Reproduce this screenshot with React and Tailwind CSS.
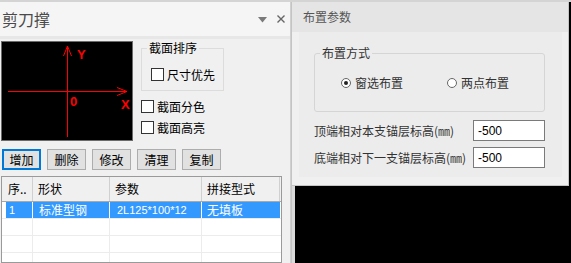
import React from "react";

function Check({ label }) {
  return (
    <div className="flex items-center h-[21px]">
      <span className="w-[13px] h-[13px] border border-[#333] bg-white shrink-0" />
      <span className="ml-[3px] leading-none">{label}</span>
    </div>
  );
}

function Radio({ label, checked, w }) {
  return (
    <div className={`flex items-center ${w}`}>
      <span className="w-[10px] h-[10px] rounded-full border border-[#666] bg-white flex items-center justify-center shrink-0">
        {checked && <span className="w-[4px] h-[4px] rounded-full bg-[#222]" />}
      </span>
      <span className="ml-[4px] leading-none">{label}</span>
    </div>
  );
}

function Btn({ label, focus }) {
  return (
    <div
      className={
        focus
          ? "w-[39px] h-[21px] border-2 border-[#0078d7] bg-[#e1e1e1] flex items-center justify-center leading-none"
          : "w-[39px] h-[21px] border border-[#adadad] bg-[#e1e1e1] flex items-center justify-center leading-none"
      }
    >
      {label}
    </div>
  );
}

function EmptyRow() {
  return (
    <div className="flex h-[17px] border-b border-[#ececec] shrink-0">
      <div className="w-[31px] border-r border-[#ececec]" />
      <div className="w-[77px] border-r border-[#ececec]" />
      <div className="w-[92px] border-r border-[#ececec]" />
      <div className="w-[79px]" />
    </div>
  );
}

export default function App() {
  return (
    <div className="w-[571px] h-[263px] overflow-hidden flex flex-col bg-black font-['Noto_Sans_CJK_SC','Microsoft_YaHei',sans-serif] text-[12px] text-black">
      <div className="h-[2px] bg-[#d4d4d4] shrink-0" />
      <div className="flex flex-1 min-h-0">
        {/* Left panel */}
        <div className="w-[291px] shrink-0 flex flex-col bg-[#f0f0f0] border-r border-[#d0d0d0]">
          <div className="h-[34px] bg-[#f5f5f5] flex items-center pl-[2px] shrink-0">
            <span className="text-[16px] leading-none text-[#4a4a4a]">剪刀撑</span>
            <div className="flex-1" />
            <svg width="9" height="6" viewBox="0 0 9 6" className="mr-[10px] mt-[2px]">
              <path d="M0 0 H9 L4.5 5.5 Z" fill="#7a7a7a" />
            </svg>
            <svg width="8" height="8" viewBox="0 0 8 8" className="mr-[5px]">
              <path d="M0.5 0.5 L7.5 7.5 M7.5 0.5 L0.5 7.5" stroke="#666" strokeWidth="1.4" />
            </svg>
          </div>
          <div className="h-[3px] bg-[#e7e7e7] shrink-0" />

          <div className="flex mt-[2px] shrink-0">
            <div className="ml-[1px] w-[132px] h-[100px] border border-[#6b6b6b] bg-black">
              <svg width="130" height="98" viewBox="2 42 130 98">
                <g stroke="#ff0000" strokeWidth="1" fill="none">
                  <path d="M67.5 46 V137" />
                  <path d="M63.5 56 L67.5 46 L71.5 56" />
                  <path d="M8 91.5 H127" />
                  <path d="M117 87.5 L127 91.5 L117 95.5" />
                </g>
                <g fill="#ff0000" fontFamily="'Liberation Sans', sans-serif" fontWeight="bold" fontSize="13">
                  <text x="77" y="59">Y</text>
                  <text x="121" y="109">X</text>
                  <text x="70" y="106">0</text>
                </g>
              </svg>
            </div>
            <div className="ml-[8px] flex flex-col">
              <fieldset className="w-[83px] h-[50px] border border-[#dcdcdc] pt-[13px]">
                <legend className="ml-[5px] px-[2px] leading-[14px]">截面排序</legend>
                <div className="-mt-[4px] pl-[9px]">
                  <Check label="尺寸优先" />
                </div>
              </fieldset>
              <div className="mt-[5px]">
                <Check label="截面分色" />
                <Check label="截面高亮" />
              </div>
            </div>
          </div>

          <div className="flex gap-[6px] pl-[2px] mt-[8px] shrink-0">
            <Btn label="增加" focus />
            <Btn label="删除" />
            <Btn label="修改" />
            <Btn label="清理" />
            <Btn label="复制" />
          </div>

          <div className="ml-[1px] mt-[6px] w-[281px] flex-1 border border-[#9a9a9a] bg-white flex flex-col overflow-hidden">
            <div className="flex h-[25px] bg-[#f0f0f0] border-b border-[#a8a8a8] shrink-0">
              <div className="w-[31px] border-r border-[#d0d0d0] pl-[6px] flex items-center">序..</div>
              <div className="w-[77px] border-r border-[#d0d0d0] pl-[5px] flex items-center">形状</div>
              <div className="w-[92px] border-r border-[#d0d0d0] pl-[5px] flex items-center">参数</div>
              <div className="w-[78px] border-r border-[#d0d0d0] pl-[5px] flex items-center">拼接型式</div>
            </div>
            <div className="flex h-[17px] border-b border-[#ececec] shrink-0 text-white">
              <div className="w-[31px] border-r border-white pl-[4px] flex">
                <div className="flex-1 bg-[#3399ff] pl-[3px] flex items-center font-['Liberation_Sans',sans-serif] text-[11px]">1</div>
              </div>
              <div className="w-[77px] border-r border-white bg-[#3399ff] pl-[6px] flex items-center">标准型钢</div>
              <div className="w-[92px] border-r border-white bg-[#3399ff] pl-[7px] flex items-center font-['Liberation_Sans',sans-serif] text-[11px]">2L125*100*12</div>
              <div className="w-[78px] bg-[#3399ff] pl-[5px] flex items-center">无填板</div>
            </div>
            <EmptyRow />
            <EmptyRow />
            <EmptyRow />
          </div>
        </div>

        {/* Right column */}
        <div className="flex-1 flex flex-col bg-black">
          <div className="w-[278px] h-[184px] shrink-0 flex flex-col border-l border-r border-b border-[#c4c4c4] bg-[#f0f0f0]">
            <div className="h-[30px] bg-[#e5e5e5] flex items-center pl-[11px] shrink-0">
              <span className="leading-none text-[#555]">布置参数</span>
            </div>
            <div className="flex-1 ml-[7px] mr-[6px] mb-[8px] bg-[#ececec] pl-[15px] pt-[14px] text-[#333]">
              <fieldset className="w-[231px] h-[66px] border border-[#d5d5d5] rounded-[3px]">
                <legend className="ml-[5px] px-[2px] leading-[14px]">布置方式</legend>
                <div className="flex h-[16px] mt-[15px] pl-[26px] items-center">
                  <Radio label="窗选布置" checked w="w-[106px]" />
                  <Radio label="两点布置" />
                </div>
              </fieldset>
              <div className="flex items-center h-[21px] mt-[8px]">
                <span className="w-[159px] leading-none">顶端相对本支锚层标高(㎜)</span>
                <div className="w-[72px] h-[21px] border border-[#7a7a7a] bg-white pl-[4px] flex items-center text-black font-['Liberation_Sans',sans-serif]">-500</div>
              </div>
              <div className="flex items-center h-[21px] mt-[6px]">
                <span className="w-[159px] leading-none whitespace-nowrap">底端相对下一支锚层标高(㎜)</span>
                <div className="w-[72px] h-[21px] border border-[#7a7a7a] bg-white pl-[4px] flex items-center text-black font-['Liberation_Sans',sans-serif]">-500</div>
              </div>
            </div>
          </div>
          <div className="flex flex-1">
            <div className="w-[4px] border-l border-[#c4c4c4] bg-[#dadada]" />
            <div className="flex-1 bg-black" />
          </div>
        </div>
      </div>
    </div>
  );
}
